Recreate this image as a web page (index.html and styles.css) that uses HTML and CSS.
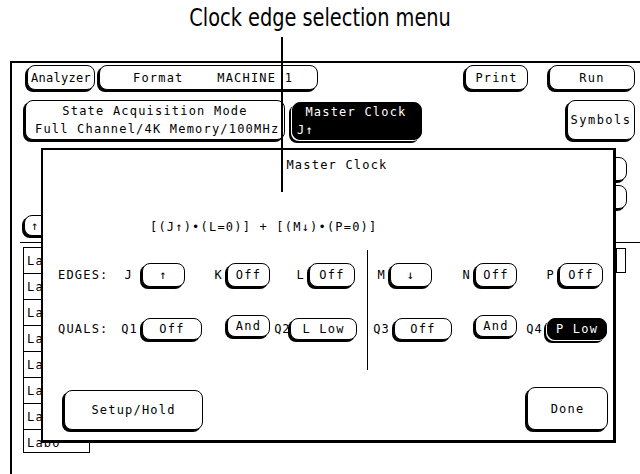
FILE: index.html
```html
<!DOCTYPE html>
<html lang="en">
<head>
    <meta charset="UTF-8">
    <meta name="viewport" content="width=device-width, initial-scale=1.0">
    <title>Clock edge selection menu</title>
    <link rel="stylesheet" href="styles.css">
</head>
<body>

<div class="caption"><span>Clock edge selection menu</span></div>
<div class="callout"></div>

<!-- Analyzer screen behind the menu -->
<div class="screen">
    <div class="row row-top">
        <div class="btn b-analyzer">Analyzer</div>
        <div class="btn b-format">Format    MACHINE 1</div>
        <div class="btn b-print">Print</div>
        <div class="btn b-run">Run</div>
    </div>
    <div class="row row-mode">
        <div class="btn b-mode">
            <span class="line center">State Acquisition Mode</span>
            <span class="line">Full Channel/4K Memory/100MHz</span>
        </div>
        <div class="btn btn-dark b-clock">
            <span class="line"> Master Clock</span>
            <span class="line">J↑</span>
        </div>
        <div class="btn b-symbols">Symbols</div>
    </div>
    <div class="panel">
        <div class="panel-top">
            <div class="btn b-scroll">↑</div>
            <div class="stubs">
                <div class="btn stub"></div>
                <div class="btn stub"></div>
            </div>
        </div>
        <div class="panel-rule"></div>
        <div class="panel-bottom">
            <div class="labels">
                <div class="cell">Lab</div>
                <div class="cell">Lab</div>
                <div class="cell">Lab</div>
                <div class="cell">Lab</div>
                <div class="cell">Lab</div>
                <div class="cell">Lab</div>
                <div class="cell">Lab</div>
                <div class="cell last">Labo</div>
            </div>
            <div class="mini"></div>
        </div>
    </div>
</div>

<!-- Master Clock pop-up menu -->
<div class="dialog">
    <div class="dlg-title">Master Clock</div>
    <div class="formula">[(J↑)•(L=0)] + [(M↓)•(P=0)]</div>

    <div class="fields">
        <div class="half half-left">
            <div class="grid edges-left">
                <span class="rowlabel">EDGES:</span>
                <span class="key key-j">J</span><div class="btn small">↑</div>
                <span class="key">K</span><div class="btn small">Off</div>
                <span class="key">L</span><div class="btn small">Off</div>
            </div>
            <div class="grid quals-left">
                <span class="rowlabel">QUALS:</span>
                <span class="key">Q1</span><div class="btn small">Off</div>
                <div class="btn small and">And</div>
                <span class="key key-tight">Q2</span><div class="btn small">L Low</div>
            </div>
        </div>
        <div class="half half-right">
            <div class="grid edges-right">
                <span class="key">M</span><div class="btn small">↓</div>
                <span class="key">N</span><div class="btn small">Off</div>
                <span class="key">P</span><div class="btn small">Off</div>
            </div>
            <div class="grid quals-right">
                <span class="key">Q3</span><div class="btn small">Off</div>
                <div class="btn small and and-r">And</div>
                <span class="key">Q4</span><div class="btn small btn-dark">P Low</div>
            </div>
        </div>
    </div>

    <div class="dlg-bottom">
        <div class="btn b-setup">Setup/Hold</div>
        <div class="btn b-done">Done</div>
    </div>
</div>

</body>
</html>
```

FILE: styles.css
```css
/* Page */
body {
    margin: 0;
    width: 640px;
    height: 474px;
    overflow: hidden;
    position: relative;
    background: #fff;
    color: #000;
    font-family: "DejaVu Sans Mono", "Liberation Mono", monospace;
    font-size: 12px;
    letter-spacing: 1.2px;
}

/* Figure caption and its pointer line */
.caption {
    height: 61px;
    box-sizing: border-box;
    padding-top: 3px;
    text-align: center;
    font-family: "DejaVu Sans Condensed", "DejaVu Sans", sans-serif;
    font-stretch: condensed;
    font-size: 25px;
    letter-spacing: 0;
}

.caption span {
    display: inline-block;
    transform: scaleX(0.86);
}

.callout {
    position: absolute;
    left: 281px;
    top: 37px;
    width: 2px;
    height: 155px;
    background: #000;
    z-index: 10;
}

/* Generic screen button: thin outline with a lower-left shadow */
.btn {
    box-sizing: border-box;
    display: flex;
    align-items: center;
    justify-content: center;
    border: 1px solid #000;
    border-radius: 8px;
    background: #fff;
    box-shadow: -2px 2px 0 #000;
    white-space: pre;
}

.btn-dark {
    background: #000;
    color: #fff;
    box-shadow: -1px 1px 0 #fff, -3px 3px 0 #000;
}

/* Analyzer screen */
.screen {
    margin-left: 10px;
    height: 413px;
    border-left: 2px solid #000;
    border-top: 2px solid #000;
}

.row {
    display: flex;
    padding-right: 5px;
}

.row-top {
    padding-top: 2px;
}

.row-top .btn {
    height: 25px;
}

.b-analyzer { margin-left: 15px; width: 68px; letter-spacing: 0.3px; }
.b-format { margin-left: 4px; width: 219px; justify-content: flex-start; padding-left: 33px; }
.b-print { margin-left: auto; width: 63px; }
.b-run { margin-left: 21px; width: 86px; }

.row-mode {
    margin-top: 10px;
    height: 40px;
    align-items: flex-end;
}

.b-mode, .b-clock {
    flex-direction: column;
    align-items: stretch;
    line-height: 18px;
}

.b-mode { margin-left: 13px; width: 260px; height: 40px; padding-left: 9px; }
.b-mode .center { text-align: center; padding-right: 9px; }
.b-clock { margin-left: 7px; width: 130px; height: 38px; padding-left: 4px; }
.b-symbols { margin-left: auto; width: 68px; height: 40px; letter-spacing: 1.5px; }

/* Lower area of the screen, mostly hidden by the menu */
.panel-top {
    display: flex;
    height: 102px;
}

.b-scroll {
    margin: 75px 0 0 12px;
    width: 36px;
    height: 21px;
    justify-content: flex-start;
    padding-left: 6px;
}

.stubs {
    margin: 17px 13px 0 auto;
    display: flex;
    flex-direction: column;
    gap: 4px;
}

.stub {
    width: 37px;
    height: 24px;
}

.panel-rule {
    margin-left: 8px;
    border-top: 1px solid #000;
}

.panel-bottom {
    display: flex;
}

.labels {
    margin: 5px 0 0 11px;
}

.cell {
    box-sizing: border-box;
    display: flex;
    align-items: center;
    width: 67px;
    height: 27px;
    margin-top: -1px;
    padding-left: 3px;
    border: 1px solid #000;
}

.cell.last {
    height: 24px;
    padding-top: 3px;
}

.mini {
    box-sizing: border-box;
    margin: 5px 14px 0 auto;
    width: 10px;
    height: 25px;
    border: 1px solid #000;
}

/* Master Clock menu */
.dialog {
    position: absolute;
    left: 41px;
    top: 148px;
    width: 575px;
    height: 295px;
    box-sizing: border-box;
    border: 2px solid #000;
    border-right-width: 3px;
    border-bottom-width: 3px;
    background: #fff;
    z-index: 5;
}

.dlg-title {
    margin-top: 7px;
    line-height: 16px;
    text-align: center;
    padding-left: 18px;
}

.formula {
    margin: 46px 0 0 107px;
    line-height: 16px;
}

.fields {
    display: flex;
    margin-top: 15px;
}

.half {
    display: flex;
    flex-direction: column;
    gap: 29px;
    padding: 12px 0 29px;
}

.half-left {
    box-sizing: border-box;
    width: 325px;
    border-right: 1px solid #000;
}

.grid {
    display: grid;
    align-items: center;
}

.edges-left { grid-template-columns: 80px 19px 43px 42px 43px 39px 46px; height: 26px; }
.quals-left { grid-template-columns: 77px 22px 60px 68px 20px 67px; height: 24px; }
.edges-right { grid-template-columns: 22px 42px 43px 42px 42px 44px; height: 26px; }
.quals-right { grid-template-columns: 26px 58px 65px 30px 60px; height: 24px; }

.edges-left .small, .edges-right .small { height: 24px; }
.quals-left .small, .quals-right .small { height: 22px; }

.rowlabel {
    padding-left: 15px;
}

.key {
    text-align: right;
    padding-right: 4px;
}

.key-j { padding-right: 9px; }
.key-tight { padding-right: 0; letter-spacing: 0.6px; }

.and {
    justify-self: end;
    align-self: start;
    margin-top: -2px;
    width: 43px;
}

.and-r { width: 42px; }

.dlg-bottom {
    display: flex;
    align-items: flex-end;
    margin-top: 17px;
    height: 43px;
}

.b-setup { margin-left: 21px; width: 139px; height: 40px; }
.b-done { margin: 0 5px 0 auto; width: 81px; height: 43px; }
```
